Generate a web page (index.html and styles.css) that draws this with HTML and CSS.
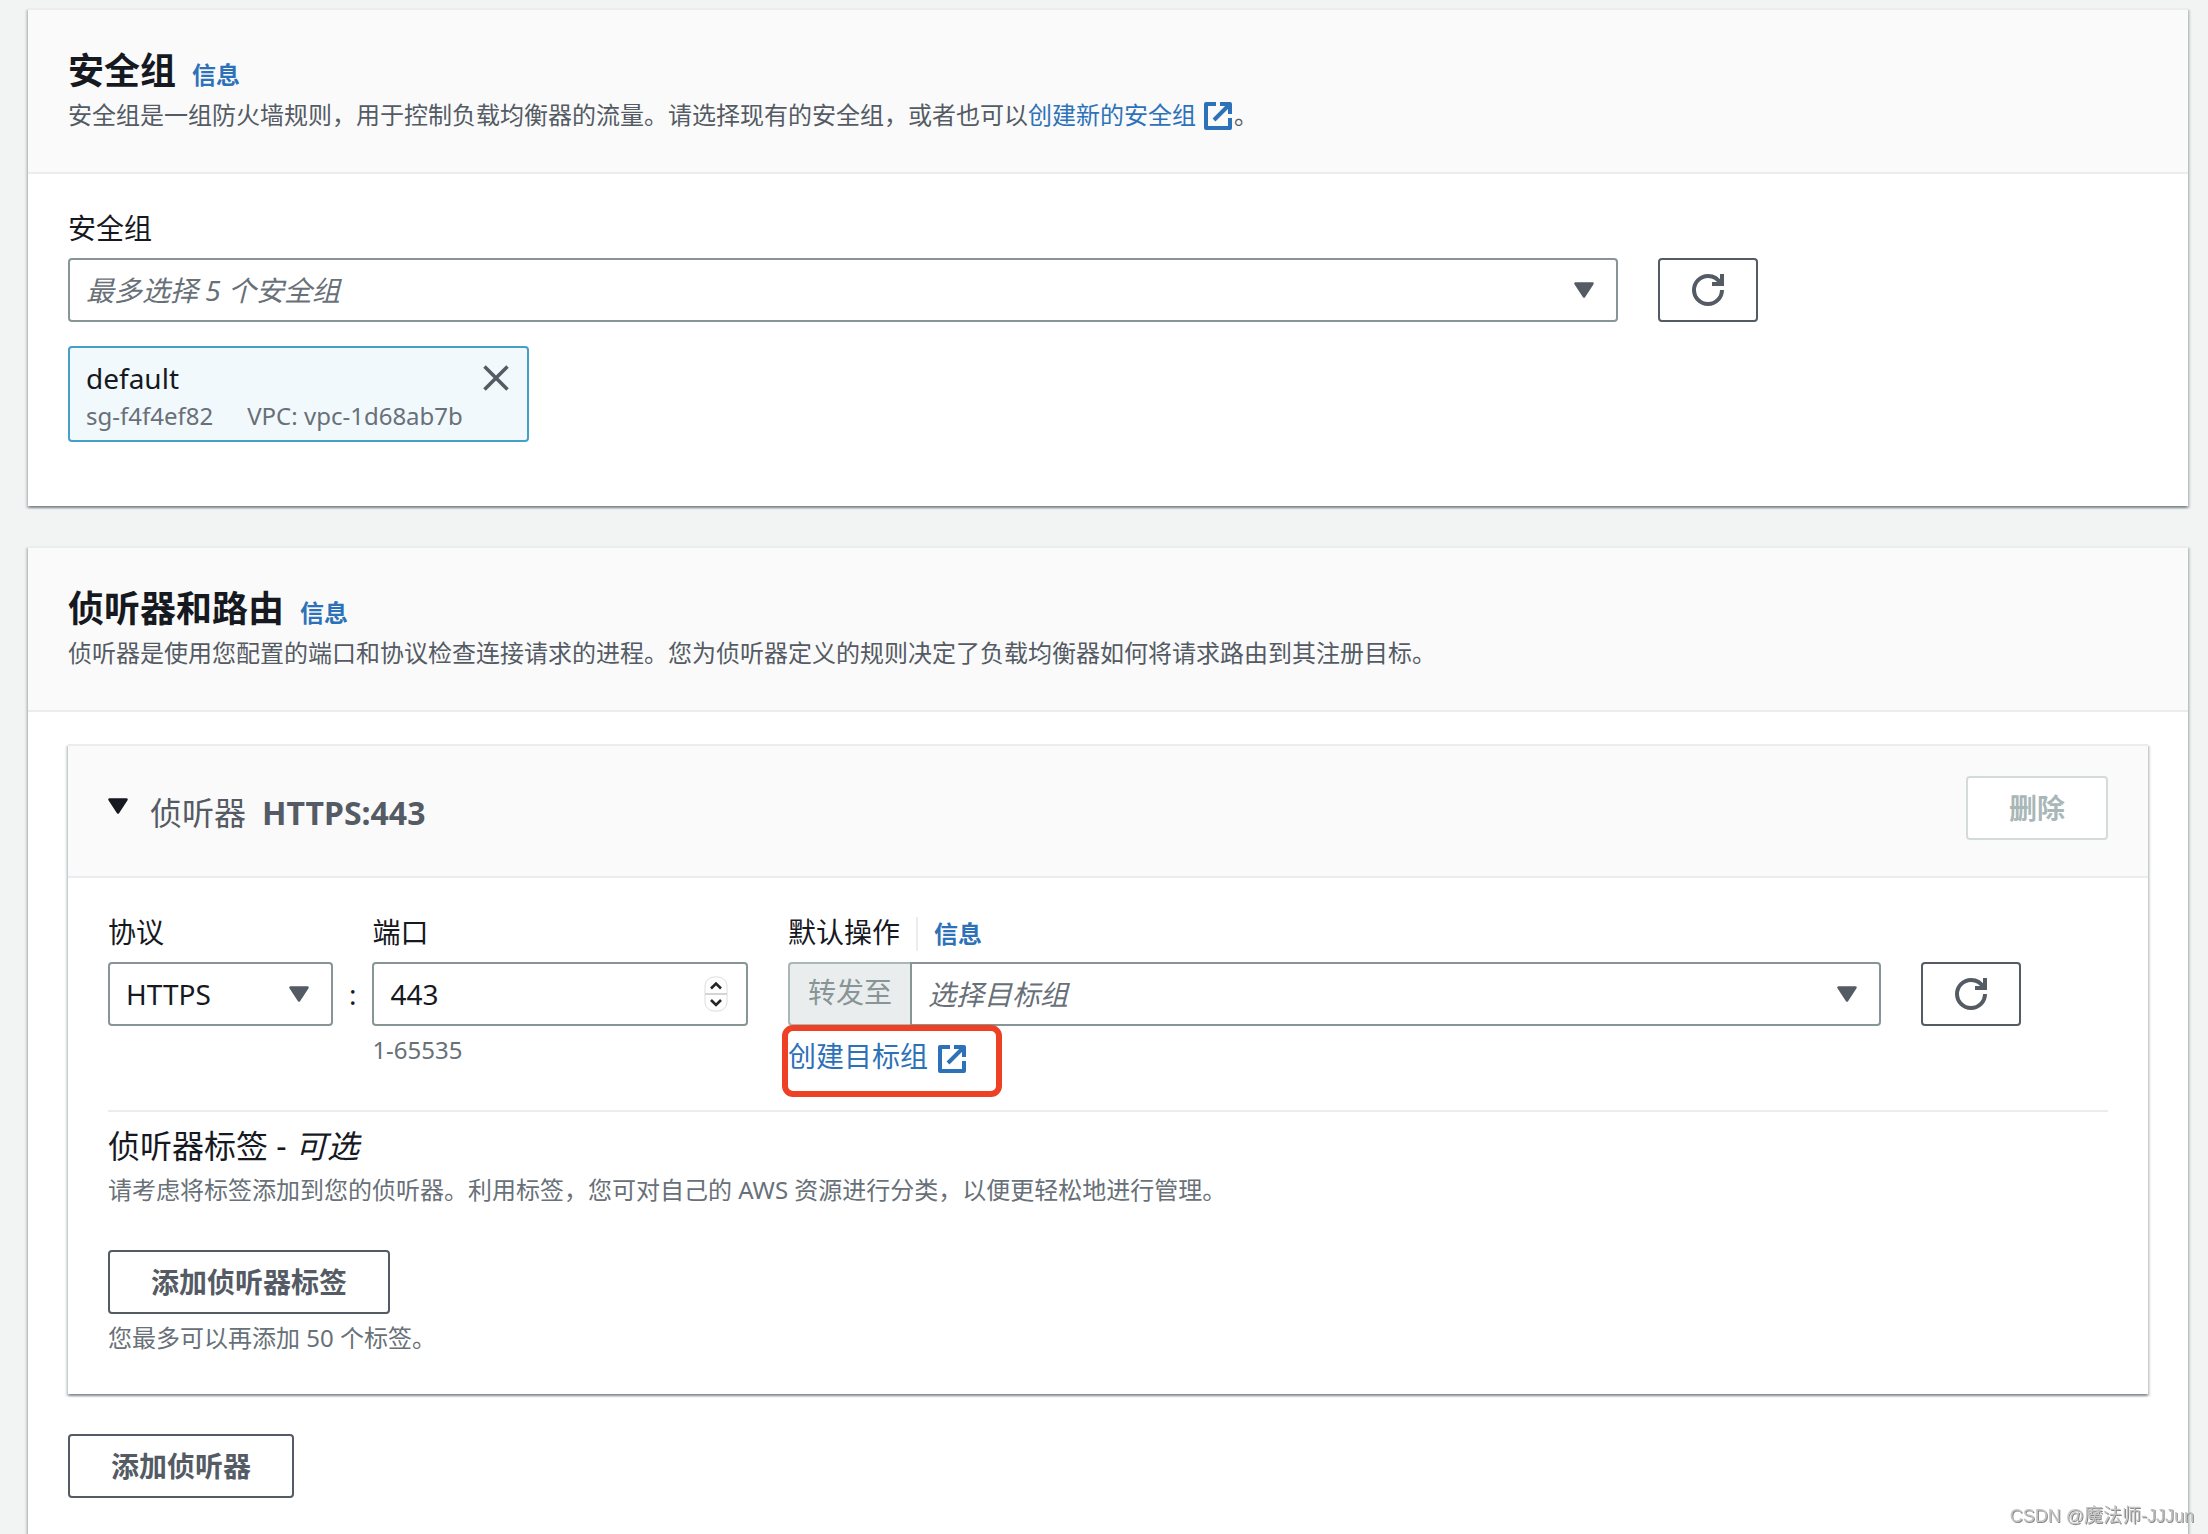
FILE: index.html
```html
<!DOCTYPE html>
<html lang="zh-CN">
<head>
<meta charset="utf-8">
<meta name="viewport" content="width=device-width, initial-scale=1">
<title>安全组 - 侦听器和路由</title>
<link rel="stylesheet" href="styles.css">
</head>
<body>
<svg class="sprite" aria-hidden="true">
  <symbol id="external" viewBox="0 0 16 16"><path d="M9 2h5v5M6 10l8-8M14 9v5H2V2h5" fill="none" stroke="currentColor" stroke-width="2" stroke-linejoin="round"/></symbol>
  <symbol id="refresh" viewBox="0 0 16 16"><path d="M15 8c0 3.87-3.13 7-7 7s-7-3.13-7-7 3.13-7 7-7c2.79 0 5.2 1.63 6.33 4M15 0v5h-5" fill="none" stroke="currentColor" stroke-width="2"/></symbol>
  <symbol id="caret" viewBox="0 0 20 16"><path d="M1.5 1.5h17L10 14.5z" fill="currentColor" stroke="currentColor" stroke-width="2.5" stroke-linejoin="round"/></symbol>
  <symbol id="close" viewBox="0 0 26 26"><path d="M1.5 1.5l23 23M24.5 1.5l-23 23" fill="none" stroke="currentColor" stroke-width="3.6"/></symbol>
</svg>

<main class="page">
  <section class="panel">
    <header class="panel-header">
      <div class="panel-title">
        <h2>安全组</h2>
        <a class="info" href="#info-sg">信息</a>
      </div>
      <p>安全组是一组防火墙规则，用于控制负载均衡器的流量。请选择现有的安全组，或者也可以<a href="#create-sg">创建新的安全组<svg class="icon external"><use href="#external"/></svg></a>。</p>
    </header>
    <div class="panel-body">
      <label class="label" for="sg">安全组</label>
      <div class="grid">
        <div class="select span-9">
          <select id="sg" class="control placeholder"><option>最多选择 5 个安全组</option></select>
          <svg class="caret"><use href="#caret"/></svg>
        </div>
        <button class="button button-icon" type="button" aria-label="刷新安全组"><svg class="icon"><use href="#refresh"/></svg></button>
      </div>
      <div class="token">
        <div>
          <div class="token-name">default</div>
          <div class="token-meta"><span>sg-f4f4ef82</span><span>VPC: vpc-1d68ab7b</span></div>
        </div>
        <button class="token-close" type="button" aria-label="移除 default"><svg><use href="#close"/></svg></button>
      </div>
    </div>
  </section>

  <section class="panel panel-last">
    <header class="panel-header">
      <div class="panel-title">
        <h2>侦听器和路由</h2>
        <a class="info" href="#info-listeners">信息</a>
      </div>
      <p>侦听器是使用您配置的端口和协议检查连接请求的进程。您为侦听器定义的规则决定了负载均衡器如何将请求路由到其注册目标。</p>
    </header>
    <div class="panel-body">
      <section class="panel listener">
        <header class="listener-header">
          <button class="toggle" type="button" aria-expanded="true">
            <svg class="toggle-caret"><use href="#caret"/></svg>
            <span>侦听器</span>
            <strong>HTTPS:443</strong>
          </button>
          <button class="button" type="button" disabled>删除</button>
        </header>
        <div class="listener-body">
          <div class="grid listener-row">
            <div class="endpoint">
              <div class="field">
                <label class="label" for="protocol">协议</label>
                <div class="select">
                  <select id="protocol" class="control"><option>HTTPS</option></select>
                  <svg class="caret"><use href="#caret"/></svg>
                </div>
              </div>
              <span class="colon">:</span>
              <div class="field">
                <label class="label" for="port">端口</label>
                <div class="number">
                  <input id="port" class="control" type="number" min="1" max="65535" value="443">
                  <svg class="stepper" viewBox="0 0 24 36" aria-hidden="true">
                    <rect x="1" y="1" width="22" height="34" rx="9" fill="#fff" stroke="#dcdcdc"/>
                    <path d="M1 18h22" stroke="#d4d4d4" stroke-width="2"/>
                    <path d="M7 12.5l5-5 5 5M7 24l5 5 5-5" fill="none" stroke="#262626" stroke-width="2.6"/>
                  </svg>
                </div>
                <p class="hint">1-65535</p>
              </div>
            </div>
            <div class="action">
              <div class="action-label">
                <label class="label" for="target">默认操作</label>
                <a class="info" href="#info-action">信息</a>
              </div>
              <div class="grid">
                <div class="forward">
                  <span class="prefix">转发至</span>
                  <div class="select">
                    <select id="target" class="control placeholder"><option>选择目标组</option></select>
                    <svg class="caret"><use href="#caret"/></svg>
                  </div>
                </div>
                <button class="button button-icon" type="button" aria-label="刷新目标组"><svg class="icon"><use href="#refresh"/></svg></button>
              </div>
              <a class="create" href="#create-target">创建目标组<svg class="icon external"><use href="#external"/></svg></a>
            </div>
          </div>
          <div class="tags">
            <h3>侦听器标签 - <em>可选</em></h3>
            <p>请考虑将标签添加到您的侦听器。利用标签，您可对自己的 AWS 资源进行分类，以便更轻松地进行管理。</p>
            <button class="button" type="button">添加侦听器标签</button>
            <p class="hint">您最多可以再添加 50 个标签。</p>
          </div>
        </div>
      </section>
      <button class="button" type="button">添加侦听器</button>
    </div>
  </section>
</main>
<div class="watermark">CSDN @<span>魔法师</span>-JJJun</div>
</body>
</html>
```
FILE: styles.css
```css
* {
  box-sizing: border-box;
}

body,
h2,
h3,
p {
  margin: 0;
}

body {
  background: #f2f3f3;
  color: #16191f;
  font: 28px/44px "Noto Sans", "Noto Sans CJK SC", sans-serif;
}

button,
input,
select {
  font: inherit;
  color: inherit;
}

a {
  color: #2d72b8;
  text-decoration: none;
}

.sprite {
  display: none;
}

.page {
  display: flex;
  flex-direction: column;
  gap: 40px;
  min-height: 100vh;
  padding: 8px 20px 0 28px;
}

/* Panels */
.panel {
  background: #fff;
  border-top: 2px solid #eaeded;
  box-shadow: 0 2px 2px rgba(0, 28, 36, 0.3), 2px 2px 2px rgba(0, 28, 36, 0.15), -2px 2px 2px rgba(0, 28, 36, 0.15);
}

.panel-header {
  padding: 38px 40px 36px;
  background: #fafafa;
  border-bottom: 2px solid #eaeded;
  color: #545b64;
  font-size: 24px;
  line-height: 42px;
}

.panel-title {
  display: flex;
  align-items: baseline;
  gap: 16px;
  height: 46px;
}

h2 {
  color: #16191f;
  font-size: 36px;
  line-height: 46px;
}

.info {
  font-size: 24px;
  font-weight: 700;
}

.panel-body {
  padding: 32px 40px 64px;
}

.panel-last {
  flex: 1;
}

.panel-last > .panel-body {
  padding-bottom: 32px;
}

/* Form controls */
.grid {
  display: grid;
  grid-template-columns: repeat(12, 1fr);
  column-gap: 40px;
}

.span-9 {
  grid-column: span 9;
}

.label {
  display: block;
  height: 44px;
  margin-bottom: 8px;
}

.select,
.number {
  position: relative;
}

.control {
  display: block;
  width: 100%;
  height: 64px;
  padding: 0 16px;
  appearance: none;
  background: #fff;
  border: 2px solid #879596;
  border-radius: 4px;
}

.control::-webkit-inner-spin-button {
  appearance: none;
}

.placeholder {
  color: #687078;
  font-style: italic;
}

.caret {
  position: absolute;
  top: 24px;
  right: 24px;
  width: 20px;
  height: 16px;
  color: #545b64;
  pointer-events: none;
}

.stepper {
  position: absolute;
  top: 14px;
  right: 20px;
  width: 24px;
  height: 36px;
  pointer-events: none;
}

.icon {
  width: 32px;
  height: 32px;
}

.external {
  margin-left: 6px;
  vertical-align: -8px;
}

.button {
  height: 64px;
  padding: 0 41px;
  background: #fff;
  border: 2px solid #545b64;
  border-radius: 4px;
  color: #545b64;
  font-weight: 700;
}

.button:disabled {
  border-color: #d5dbdb;
  color: #aab7b8;
}

.button-icon {
  display: grid;
  grid-column: span 2;
  place-items: center;
  width: 100px;
  padding: 0;
}

.hint {
  margin-top: 8px;
  color: #687078;
  font-size: 24px;
  line-height: 32px;
}

/* Selected group */
.token {
  display: inline-flex;
  align-items: flex-start;
  gap: 20px;
  margin-top: 24px;
  padding: 8px 18px 8px 16px;
  background: #f2f9fd;
  border: 2px solid #45a0c6;
  border-radius: 4px;
  vertical-align: top;
}

.token-meta {
  display: flex;
  gap: 34px;
  color: #687078;
  font-size: 24px;
  line-height: 32px;
}

.token-close {
  display: flex;
  margin-top: 9px;
  padding: 0;
  background: none;
  border: 0;
  color: #545b64;
}

.token-close svg {
  width: 26px;
  height: 26px;
}

/* Listener */
.listener {
  margin-bottom: 40px;
}

.listener-header {
  display: flex;
  align-items: flex-end;
  justify-content: space-between;
  padding: 30px 40px 36px;
  background: #fafafa;
  border-bottom: 2px solid #eaeded;
}

.toggle {
  display: flex;
  padding: 0;
  background: none;
  border: 0;
  color: #545b64;
  font-size: 32px;
  line-height: 54px;
}

.toggle-caret {
  width: 20px;
  height: 16px;
  margin: 12px 22px 0 0;
  color: #16191f;
}

.toggle strong {
  margin-left: 16px;
}

.listener-body {
  padding: 32px 40px 40px;
}

.endpoint {
  display: grid;
  grid-column: span 4;
  grid-template-columns: 3fr 39px 5fr;
}

.colon {
  padding-top: 52px;
  line-height: 64px;
  text-align: center;
}

.action {
  grid-column: span 8;
}

.action-label {
  display: flex;
  align-items: baseline;
}

.action-label .info {
  margin-left: 16px;
  padding-left: 16px;
  border-left: 2px solid #eaeded;
  line-height: 34px;
}

.forward {
  display: flex;
  grid-column: span 10;
}

.prefix {
  height: 64px;
  padding: 0 18px;
  background: #eaeded;
  border: 2px solid #aab7b8;
  border-right: 0;
  border-radius: 4px 0 0 4px;
  color: #879596;
  line-height: 56px;
}

.forward .select {
  flex: 1;
}

.forward .control {
  border-radius: 0 4px 4px 0;
}

.create {
  position: relative;
  display: inline-block;
  height: 44px;
  margin-top: 8px;
  vertical-align: top;
}

.create .external {
  margin-left: 8px;
}

/* Highlight frame drawn over the link */
.create::after {
  content: "";
  position: absolute;
  inset: -9px -34px -19px -6px;
  border: 6px solid #ee4025;
  border-radius: 11px;
}

.tags {
  margin-top: 32px;
  padding-top: 12px;
  border-top: 2px solid #eaeded;
}

h3 {
  font-size: 32px;
  font-weight: 400;
}

.tags h3 + p {
  margin-bottom: 38px;
  color: #687078;
  font-size: 24px;
}

.tags .button {
  display: block;
}

.watermark {
  position: fixed;
  right: 14px;
  bottom: 6px;
  color: #c4c4c4;
  font: 18px/24px "Liberation Sans", "Noto Sans CJK SC", sans-serif;
  text-shadow: 1px 1px 0 #8a8a8a;
}

.watermark span {
  font-size: 19px;
}
```
